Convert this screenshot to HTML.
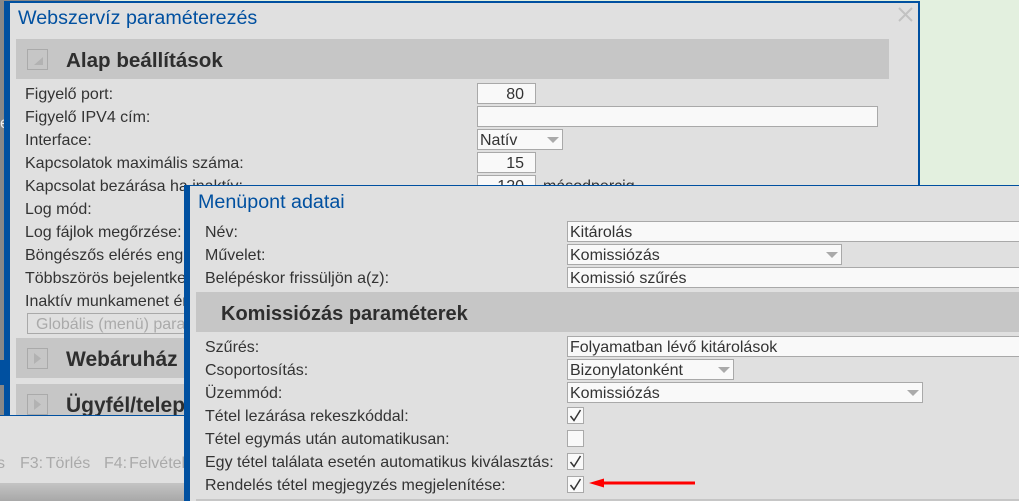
<!DOCTYPE html>
<html><head><meta charset="utf-8"><style>
html,body{margin:0;padding:0}
body{width:1019px;height:501px;position:relative;overflow:hidden;background:#e3f0df;font-family:"Liberation Sans",sans-serif;font-size:16px;color:#333}
.a{position:absolute;box-sizing:border-box}
.t{position:absolute;white-space:nowrap;line-height:23px;height:21px}
.i{position:absolute;box-sizing:border-box;background:#f9f9f9;border:1px solid #a9a9a9;height:21px;line-height:21px;padding-left:2px;white-space:nowrap;overflow:hidden;color:#333}
.r{text-align:right;padding:0 11px 0 0}
.h{position:absolute;background:#c6c6c6;height:40px;overflow:hidden}
.h b{position:absolute;top:10px;line-height:24px;color:#2e2e2e;white-space:nowrap}
.b{position:absolute;left:11px;top:10px;width:21px;height:21px;border:1px solid #aaa;box-sizing:border-box}
.ar{position:absolute;width:0;height:0;border-left:6.5px solid transparent;border-right:6.5px solid transparent;border-top:6px solid #aaa}
.c{position:absolute;box-sizing:border-box;width:17px;height:17px;background:#f9f9f9;border:1px solid #a9a9a9}
.c svg{position:absolute;left:0;top:0}
</style></head><body>
<div class="a" style="left:0;top:0;width:100px;height:1px;background:#888"></div>
<div class="a" style="left:0;top:1px;width:4px;height:359px;background:#888"></div>
<div class="a" style="left:0;top:360px;width:4px;height:25px;background:#0050a0"></div>
<div class="a" style="left:0;top:385px;width:4px;height:31px;background:#888"></div>
<div class="t" style="left:0;top:112px;width:4px;overflow:hidden;color:#eee">e</div>

<div class="a" style="left:4px;top:1px;width:916px;height:415px;background:#e0e0e0;border-top:2px solid #0050a0;border-left:6px solid #0050a0;border-right:2px solid #0050a0;overflow:hidden"></div>
<div class="t" style="left:18px;top:6px;font-size:19.7px;color:#0050a0;line-height:24px;height:22px">Webszervíz paraméterezés</div>
<svg class="a" style="left:898px;top:7px" width="15" height="15"><path d="M1 1L14 14M14 1L1 14" stroke="#c2c2c2" stroke-width="2" fill="none"/></svg>

<div class="h" style="left:16px;top:39px;width:873px"><div class="b"></div><svg class="a" style="left:11px;top:10px" width="21" height="21"><path d="M7 16H16V8Z" fill="#b2b2b2"/></svg><b style="left:50px;font-size:20.6px">Alap beállítások</b></div>
<div class="t" style="left:25px;top:83px">Figyelő port:</div>
<div class="t" style="left:25px;top:106px">Figyelő IPV4 cím:</div>
<div class="t" style="left:25px;top:129px">Interface:</div>
<div class="t" style="left:25px;top:152px">Kapcsolatok maximális száma:</div>
<div class="t" style="left:25px;top:175px">Kapcsolat bezárása ha inaktív:</div>
<div class="t" style="left:25px;top:198px">Log mód:</div>
<div class="t" style="left:25px;top:221px">Log fájlok megőrzése:</div>
<div class="t" style="left:25px;top:244px">Böngészős elérés engedélyezése:</div>
<div class="t" style="left:25px;top:267px">Többszörös bejelentkezés:</div>
<div class="t" style="left:25px;top:290px">Inaktív munkamenet érvényessége:</div>
<div class="i" style="left:27px;top:313px;width:200px;color:#aaa;background:#e0e0e0;padding-left:8px">Globális (menü) paraméterek</div>
<div class="i r" style="left:477px;top:83px;width:59px">80</div>
<div class="i" style="left:477px;top:106px;width:401px"></div>
<div class="i" style="left:477px;top:129px;width:86px">Natív</div><div class="ar" style="left:547px;top:137px"></div>
<div class="i r" style="left:477px;top:152px;width:59px">15</div>
<div class="i r" style="left:477px;top:175px;width:59px">120</div>
<div class="t" style="left:543px;top:175px">másodpercig</div>
<div class="h" style="left:16px;top:338px;width:873px"><div class="b"></div><svg class="a" style="left:11px;top:10px" width="21" height="21"><path d="M7 5L14 10.500L7 16Z" fill="#b2b2b2"/></svg><b style="left:50px;font-size:21px">Webáruház</b></div>
<div class="h" style="left:16px;top:384px;width:873px"><div class="b"></div><svg class="a" style="left:11px;top:10px" width="21" height="21"><path d="M7 5L14 10.500L7 16Z" fill="#b2b2b2"/></svg><b style="left:50px;font-size:21px">Ügyfél/telephely</b></div>

<div class="a" style="left:0;top:415px;width:190px;height:1px;background:#0050a0"></div>
<div class="a" style="left:0;top:416px;width:184px;height:67px;background:#e0e0e0"></div>
<div class="a" style="left:0;top:483px;width:184px;height:18px;background:linear-gradient(#c4c4c4,#a8a8a8)"></div>
<div class="t" style="left:-3px;top:453px;color:#aaa;line-height:21px">s</div>
<div class="t" style="left:20px;top:453px;color:#aaa;line-height:21px;word-spacing:-1.500px">F3: Törlés</div>
<div class="t" style="left:104px;top:453px;width:80px;overflow:hidden;color:#aaa;line-height:21px;word-spacing:-2.500px">F4: Felvétel</div>

<div class="a" style="left:184px;top:185px;width:835px;height:316px;background:#e0e0e0;border-top:1px solid #0050a0;border-left:6px solid #0050a0"></div>
<div class="t" style="left:198px;top:190px;font-size:19.7px;color:#0050a0;line-height:24px;height:22px">Menüpont adatai</div>
<div class="t" style="left:205px;top:221px">Név:</div>
<div class="t" style="left:205px;top:244px">Művelet:</div>
<div class="t" style="left:205px;top:267px">Belépéskor frissüljön a(z):</div>
<div class="i" style="left:567px;top:221px;width:460px">Kitárolás</div>
<div class="i" style="left:567px;top:244px;width:275px">Komissiózás</div><div class="ar" style="left:826px;top:252px"></div>
<div class="i" style="left:567px;top:267px;width:460px">Komissió szűrés</div>
<div class="h" style="left:196px;top:292px;width:823px"><b style="left:25px;font-size:20px">Komissiózás paraméterek</b></div>
<div class="t" style="left:205px;top:336px">Szűrés:</div>
<div class="t" style="left:205px;top:359px">Csoportosítás:</div>
<div class="t" style="left:205px;top:382px">Üzemmód:</div>
<div class="t" style="left:205px;top:405px">Tétel lezárása rekeszkóddal:</div>
<div class="t" style="left:205px;top:428px">Tétel egymás után automatikusan:</div>
<div class="t" style="left:205px;top:451px">Egy tétel találata esetén automatikus kiválasztás:</div>
<div class="t" style="left:205px;top:474px">Rendelés tétel megjegyzés megjelenítése:</div>
<div class="i" style="left:567px;top:336px;width:460px">Folyamatban lévő kitárolások</div>
<div class="i" style="left:567px;top:359px;width:167px">Bizonylatonként</div><div class="ar" style="left:718px;top:367px"></div>
<div class="i" style="left:567px;top:382px;width:356px">Komissiózás</div><div class="ar" style="left:907px;top:390px"></div>
<div class="c" style="left:567px;top:407px"><svg width="15" height="15"><path d="M2.500 8L6 12.500L12.500 2" stroke="#333" stroke-width="1.500" fill="none"/></svg></div>
<div class="c" style="left:567px;top:430px"></div>
<div class="c" style="left:567px;top:453px"><svg width="15" height="15"><path d="M2.500 8L6 12.500L12.500 2" stroke="#333" stroke-width="1.500" fill="none"/></svg></div>
<div class="c" style="left:567px;top:476px"><svg width="15" height="15"><path d="M2.500 8L6 12.500L12.500 2" stroke="#333" stroke-width="1.500" fill="none"/></svg></div>
<svg class="a" style="left:585px;top:475px" width="115" height="16"><path d="M4 8L19 3.500V6.500H110V9.500H19V12.500Z" fill="#f00"/></svg>
<div class="a" style="left:196px;top:499px;width:823px;height:2px;background:#c6c6c6"></div>
</body></html>
